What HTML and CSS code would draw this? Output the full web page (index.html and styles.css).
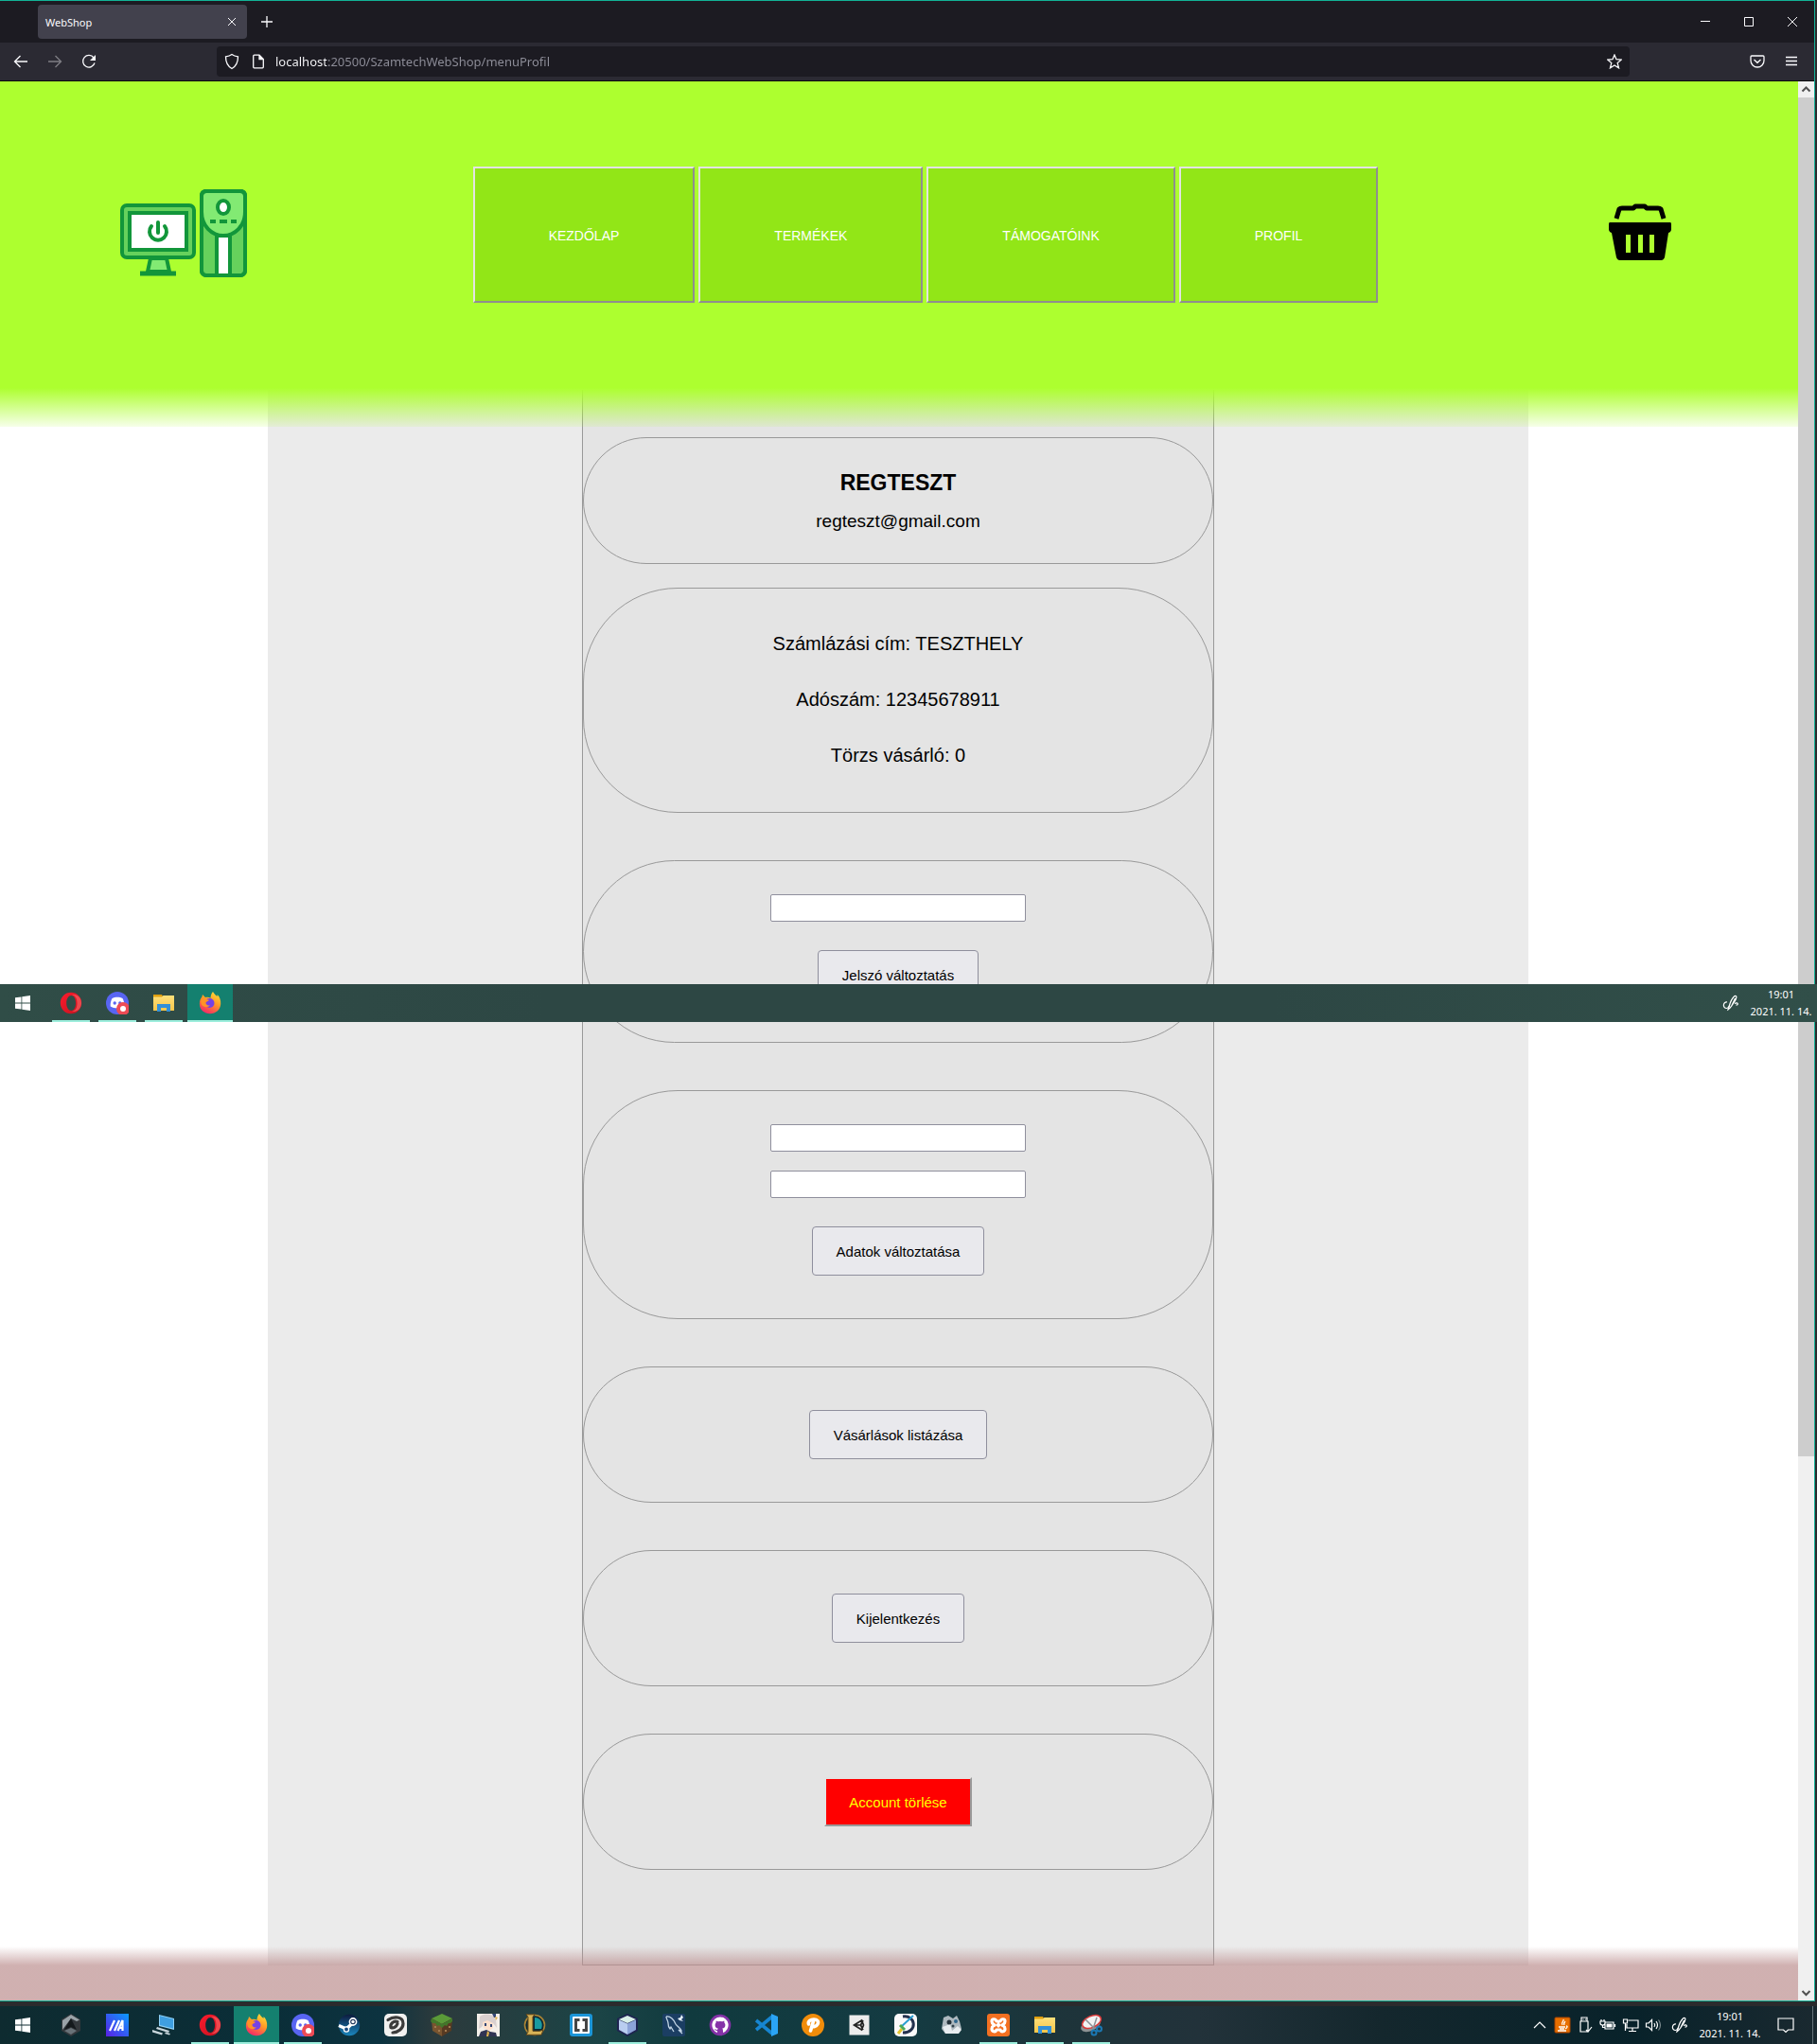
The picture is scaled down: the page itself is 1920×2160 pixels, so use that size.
FILE: index.html
```html
<!DOCTYPE html>
<html lang="hu">
<head>
<meta charset="utf-8">
<title>WebShop</title>
<link rel="stylesheet" href="styles.css">
</head>
<body>
<svg class="defs" aria-hidden="true">
  <defs>
    <linearGradient id="g-opera" x1="0" y1="0" x2="1" y2="1"><stop offset="0" stop-color="#ff1b2d"/><stop offset="1" stop-color="#c1121f"/></linearGradient>
    <linearGradient id="g-fire" x1="0.8" y1="0" x2="0.3" y2="1"><stop offset="0" stop-color="#ffe03a"/><stop offset="0.45" stop-color="#ff9a26"/><stop offset="1" stop-color="#f4256a"/></linearGradient>
    <linearGradient id="g-folder" x1="0" y1="0" x2="0" y2="1"><stop offset="0" stop-color="#ffe07a"/><stop offset="1" stop-color="#f7c64a"/></linearGradient>
    <linearGradient id="g-steam" x1="0" y1="0" x2="0" y2="1"><stop offset="0" stop-color="#0d1b3e"/><stop offset="1" stop-color="#1a86bd"/></linearGradient>
    <linearGradient id="g-m" x1="0" y1="1" x2="1" y2="0"><stop offset="0" stop-color="#5a1fe6"/><stop offset="1" stop-color="#0a9bff"/></linearGradient>
  </defs>
  <symbol id="i-start" viewBox="0 0 24 24"><path fill="#fff" d="M4 6.300l6.500-.9v6.200H4zM11.300 5.300L20 4v7.600h-8.700zM4 12.400h6.500v6.200L4 17.700zM11.300 12.400H20V20l-8.700-1.300z"/></symbol>
  <symbol id="i-opera" viewBox="0 0 24 24"><path fill="url(#g-opera)" fill-rule="evenodd" d="M12 .8a11.200 11.200 0 1 0 0 22.400A11.200 11.200 0 1 0 12 .8zM12.300 4c2.800 0 4.700 3.500 4.700 8s-1.900 8-4.700 8-5.100-3.500-5.100-8 2.300-8 5.100-8z"/><path fill="#ff6a6a" d="M13 3.400c4 .3 5.500 4 5.500 8.600s-1.500 8.300-5.500 8.600c5 1.400 10-2.600 10-8.600s-5-10-10-8.600z" opacity=".6"/></symbol>
  <symbol id="i-discord" viewBox="0 0 24 24"><circle cx="12" cy="12" r="12" fill="#5865f2"/><path fill="#fff" d="M6.500 7c3-1.600 8-1.600 11 0 1.500 2.600 2 5.600 1.800 8.600-3.500 2.600-11 2.600-14.600 0C4.500 12.600 5 9.600 6.500 7z"/><circle cx="9.200" cy="12" r="1.700" fill="#5865f2"/><circle cx="14.800" cy="12" r="1.700" fill="#5865f2"/><circle cx="18" cy="18" r="7" fill="#ed4b55"/><circle cx="18" cy="18" r="3" fill="#fff"/></symbol>
  <symbol id="i-folder" viewBox="0 0 24 24"><path fill="#e0a010" d="M1 3h9l1 2v3H1z"/><path fill="url(#g-folder)" d="M1 5.500h9L11.500 4H23v16H1z"/><path fill="#3390d8" d="M5 13h14v8h-4v-4H9v4H5z"/></symbol>
  <symbol id="i-firefox" viewBox="0 0 24 24"><path fill="url(#g-fire)" d="M15 0c1 2 2.300 3 4.500 5 .2-.6 0-1.300 0-2C22 5 23.500 9 23.200 13 22.700 19 18 23.300 12 23.300 6 23.300 1 19 .9 13 .8 9.500 2 7 3.500 5.200L4 3l3 3c2-.5 4-.3 5.500.8C12.600 4 13.500 1.500 15 0z"/><circle cx="11.500" cy="12" r="5" fill="#7542e5"/><path fill="#ff9226" d="M2 8c3-1 5 0 9 .8-1 1.700-3 1.400-3.500 2.700-.3 1.700 1.500 3.500 4.500 3C8 18 3 15.500 2.500 12z"/></symbol>
  <symbol id="i-pen" viewBox="0 0 18 18"><g fill="none" stroke="#fff" stroke-width="1.200"><path d="M5 8c-4.500-.5-5 6.500-.5 6.500 2 0 2-2.500 3.500-2.800"/><path d="M7 13C8 9 10 4 13 1.500c3-.7 2 3-.5 6.500S8.500 14.500 6 16zM9.500 12.500L13.500 4M13 9.500c3.500-2 4.500 1.500 1.500 1.700"/></g></symbol>
</svg>

<div class="window">
  <div class="titlebar">
    <div class="tab"><span>WebShop</span>
      <button class="icon-btn tab-close" aria-label="Lap bezárása"><svg width="10" height="10" viewBox="0 0 10 10"><path d="M1 1l8 8M9 1l-8 8"/></svg></button>
    </div>
    <button class="icon-btn new-tab" aria-label="Új lap"><svg width="12" height="12" viewBox="0 0 12 12"><path d="M6 0v12M0 6h12"/></svg></button>
    <div class="window-buttons">
      <button class="icon-btn" aria-label="Kis méret"><svg width="10" height="10" viewBox="0 0 10 10"><path d="M0 4.500h10"/></svg></button>
      <button class="icon-btn" aria-label="Teljes méret"><svg width="10" height="10" viewBox="0 0 10 10"><path d="M.5.5h9v9h-9z"/></svg></button>
      <button class="icon-btn" aria-label="Bezárás"><svg width="10" height="10" viewBox="0 0 10 10"><path d="M0 0l10 10M10 0L0 10"/></svg></button>
    </div>
  </div>
  <div class="toolbar">
    <div class="history">
      <button class="icon-btn" aria-label="Vissza"><svg width="16" height="16" viewBox="0 0 16 16"><path d="M15 8H1.500M7.500 2l-6 6 6 6"/></svg></button>
      <button class="icon-btn dim" aria-label="Előre"><svg width="16" height="16" viewBox="0 0 16 16"><path d="M1 8h13.500M8.500 2l6 6-6 6"/></svg></button>
      <button class="icon-btn" aria-label="Frissítés"><svg width="16" height="16" viewBox="0 0 16 16"><path d="M14 9.500A6.300 6.300 0 1 1 13 4"/><path class="solid" d="M15 1v6H9z"/></svg></button>
    </div>
    <div class="urlbar">
      <svg width="16" height="18" viewBox="0 0 16 18"><path d="M8 1.500c2 1.500 4 2 6.500 2.300 0 6-1.500 10-6.500 12.700C3 13.800 1.500 9.800 1.500 3.800 4 3.500 6 3 8 1.500z"/></svg>
      <svg class="doc" width="14" height="16" viewBox="0 0 14 16"><path d="M1.700 2.200q0-1 1-1H8L12.300 5.500v8.300q0 1-1 1H2.700q-1 0-1-1zM8 1.200v4.300h4.300"/><path class="solid" d="M8 1.200v4.300h4.300z"/></svg>
      <input class="url" type="text" aria-label="Cím" value="localhost:20500/SzamtechWebShop/menuProfil">
      <button class="icon-btn star" aria-label="Könyvjelző"><svg width="16" height="16" viewBox="0 0 16 16"><path d="M8 1l2 4.700 5.200.5-4 3.400 1.300 5.200L8 12l-4.500 2.800 1.300-5.200-4-3.400L6 5.700z"/></svg></button>
    </div>
    <div class="tools">
      <button class="icon-btn" aria-label="Pocket"><svg width="16" height="14" viewBox="0 0 16 14"><path d="M1 2q0-1 1-1h12q1 0 1 1v4a7 7 0 0 1-14 0zM4.500 5L8 8.300 11.500 5"/></svg></button>
      <button class="icon-btn" aria-label="Menü"><svg width="12" height="12" viewBox="0 0 12 12"><path d="M0 1.500h12M0 5.500h12M0 9.500h12"/></svg></button>
    </div>
  </div>

  <div class="viewport">
    <div class="page">
      <header class="site-header">
        <a href="#" class="logo" aria-label="WebShop"><svg width="134" height="94" viewBox="0 0 134 94">
          <g stroke="#12963a" stroke-width="4">
            <path fill="#82ea73" d="M32 73h17l3 14H29z"/>
            <rect x="2" y="17" width="76" height="55" rx="5" fill="#66d15c"/>
            <rect x="10" y="25" width="60" height="39" fill="#fff"/>
            <path fill="none" d="M21 89h38" stroke-width="5"/>
            <path fill="none" d="M33 39a9 9 0 1 0 14 0M40 35v11" stroke-linecap="round"/>
            <rect x="86" y="2" width="46" height="89" rx="5" fill="#66d15c"/>
            <path fill="#fff" d="M102 49h14v42h-14z"/>
            <path fill="#82ea73" d="M91 2h36q5 0 5 5v17c0 15-11 25-23 25S86 39 86 24V7q0-5 5-5z"/>
            <ellipse cx="109" cy="19" rx="6" ry="7" fill="#fff"/>
            <path d="M95 34h6M105 34h8M117 34h6"/>
            <rect x="86" y="2" width="46" height="89" rx="5" fill="none"/>
          </g></svg></a>
        <nav class="menu">
          <button>KEZDŐLAP</button>
          <button>TERMÉKEK</button>
          <button>TÁMOGATÓINK</button>
          <button>PROFIL</button>
        </nav>
        <a href="#" class="basket" aria-label="Kosár"><svg width="66" height="60" viewBox="0 0 66 60">
          <path fill="none" stroke="#000" stroke-width="5" stroke-linejoin="round" d="M8 16L11 6q1-1 3-1h12l2-2h10l2 2h12q2 0 3 1l3 10"/>
          <path fill-rule="evenodd" d="M1 20h64q1 0 1 2v5q0 3-3 4l-4 26q-1 3-3 3H11q-2 0-3-3L3 31q-3-1-3-4v-5q0-2 1-2zM18 33v19h5V33zM31 33v19h5V33zM43 33v19h5V33z"/></svg></a>
      </header>

      <main class="content">
        <div class="profile">
          <section class="card user">
            <h1>REGTESZT</h1>
            <p>regteszt@gmail.com</p>
          </section>
          <section class="card details">
            <p>Számlázási cím: TESZTHELY</p>
            <p>Adószám: 12345678911</p>
            <p>Törzs vásárló: 0</p>
          </section>
          <form class="card fields">
            <input type="password" aria-label="Új jelszó">
            <button type="button">Jelszó változtatás</button>
          </form>
          <form class="card fields">
            <input type="text" aria-label="Számlázási cím">
            <input type="text" aria-label="Adószám">
            <button type="button">Adatok változtatása</button>
          </form>
          <form class="card single"><button type="button">Vásárlások listázása</button></form>
          <form class="card single"><button type="button">Kijelentkezés</button></form>
          <form class="card single"><button type="button" class="danger">Account törlése</button></form>
        </div>
      </main>
      <footer class="site-footer"></footer>
    </div>
    <div class="scrollbar">
      <svg width="17" height="17" viewBox="0 0 17 17"><path d="M4.500 10.500l4-4 4 4"/></svg>
      <div class="track"><div class="thumb"></div></div>
      <svg width="17" height="17" viewBox="0 0 17 17"><path d="M4.500 7l4 4 4-4"/></svg>
    </div>
  </div>
</div>

<div class="taskbar upper">
  <button class="task start" aria-label="Start"><svg><use href="#i-start"/></svg></button>
  <button class="task open" aria-label="Opera"><svg><use href="#i-opera"/></svg></button>
  <button class="task open" aria-label="Discord"><svg><use href="#i-discord"/></svg></button>
  <button class="task open" aria-label="Fájlkezelő"><svg><use href="#i-folder"/></svg></button>
  <button class="task active" aria-label="Firefox"><svg><use href="#i-firefox"/></svg></button>
  <div class="tray"><svg class="t18"><use href="#i-pen"/></svg>
    <div class="clock"><span>19:01</span><span>2021. 11. 14.</span></div></div>
</div>

<div class="taskbar lower">
  <button class="task start" aria-label="Start"><svg><use href="#i-start"/></svg></button>
  <button class="task" aria-label="Armoury Crate"><svg viewBox="0 0 24 24"><path fill="#33383c" d="M12 0l10 6v12l-10 6L2 18V6z"/><path fill="#9aa3a8" d="M12 1l9 5.500L18 8l-6-3-6 8-3 4V7z"/><path fill="#14191c" d="M12 5l6 12-6-3-7 3z"/><path fill="#697278" d="M5 18l7-3 6 3-6 4z"/></svg></button>
  <button class="task" aria-label="MyASUS"><svg viewBox="0 0 24 24"><path fill="url(#g-m)" d="M0 0h24v24H0z"/><path fill="none" stroke="#fff" stroke-width="2.200" d="M4 18l5-11M9 18l5-11M12.500 18l5-11v11M14.500 15h4"/></svg></button>
  <button class="task" aria-label="Ez a gép"><svg viewBox="0 0 24 24"><path fill="#8fd0f5" d="M7 1l16 4v12L7 13z"/><path fill="#3f9fe0" d="M8 2.300l14 3.500v9.800L8 12z"/><path fill="#c9d6dc" d="M5 14l13 4-1 2-13-4zM0 17l11 3.500-1 2L0 19.500zM13 21l5 1.500 1-1.500-5-1.500z"/></svg></button>
  <button class="task open" aria-label="Opera"><svg><use href="#i-opera"/></svg></button>
  <button class="task active" aria-label="Firefox"><svg><use href="#i-firefox"/></svg></button>
  <button class="task open" aria-label="Discord"><svg><use href="#i-discord"/></svg></button>
  <button class="task" aria-label="Steam"><svg viewBox="0 0 24 24"><circle cx="12" cy="12" r="11.200" fill="url(#g-steam)"/><path d="M1 12.500l8 3.500 6.500-6" fill="none" stroke="#fff" stroke-width="3.500"/><circle cx="16" cy="8.500" r="3.600" fill="#122a52" stroke="#fff" stroke-width="1.600"/><circle cx="16" cy="8.500" r="1.700" fill="#fff"/><circle cx="9" cy="16.500" r="2.600" fill="#1c4b80" stroke="#fff" stroke-width="1.300"/></svg></button>
  <button class="task" aria-label="Clip Studio Paint"><svg viewBox="0 0 24 24"><rect width="24" height="24" rx="5" fill="#f1f1f0"/><path fill="none" stroke="#3b3b3b" stroke-width="3.200" stroke-linecap="round" d="M4 6.500c6-4 16-4 16 4 0 5-5 9-11 9.500M14 8.500c-4-1.500-8 2-7 6 3 1.500 6-1 7-4"/></svg></button>
  <button class="task" aria-label="Minecraft"><svg viewBox="0 0 24 24"><path fill="#5a9a38" d="M12 0l11 5-11 6L1 5z"/><path fill="#79542f" d="M1 5l11 6v13L2 18z"/><path fill="#573a22" d="M23 5l-11 6v13l10-6z"/><path fill="#42782a" d="M1 5l11 6 11-6v3l-2 2-2 0-2 3-2-1-3 3-3-3-2 1-2-3-3 0-2-2z"/><path fill="#a17a50" d="M4 13h2v2H4zM8 17h2v2H8zM15 17h2v2h-2zM19 13h2v2h-2z"/></svg></button>
  <button class="task" aria-label="Genshin Impact"><svg viewBox="0 0 24 24"><path fill="#f4efe9" d="M0 0h24v24H0z"/><path fill="#d9d0cf" d="M3 3c5-4 14-3 17 3l1 9-4-5-8-2-4 6-3 2z"/><path fill="#ffe0cb" d="M6 9l5-2 6 3v5l-4 3-6-3z"/><path fill="#344877" d="M8 10h2v3H8zM14 11h2v3h-2zM16 0h4v4h-2z"/><path fill="#303453" d="M4 19l6-2 4 2 6 1 1 4H2z"/><path fill="#e2b34c" d="M11 18l2 2-1 4h-2zM19 3l3 1-2 3z"/></svg></button>
  <button class="task" aria-label="League of Legends"><svg viewBox="0 0 24 24"><circle cx="12" cy="12" r="10.500" fill="#0b2a35" stroke="#a98334" stroke-width="1.600"/><path fill="#1a9aa0" d="M12 4c7 0 9 7 7 12h-7z"/><path fill="#d9b457" stroke="#5d431b" d="M3 .8h9l-2 2.500v15h7l4-1-2 5H3l2-3V3.500z"/></svg></button>
  <button class="task" aria-label="Brackets"><svg viewBox="0 0 24 24"><rect width="24" height="24" rx="3" fill="#1b95d8"/><rect x="3" y="3" width="18" height="18" rx="1" fill="#fff"/><path fill="none" stroke="#454545" stroke-width="3" d="M10.500 6.500H6.500v11h4M13.500 6.500h4v11h-4"/></svg></button>
  <button class="task open" aria-label="NetBeans"><svg viewBox="0 0 24 24"><path fill="#1d2450" d="M12 0l11 5v13l-11 6L1 18V5z"/><path fill="#d8f0e8" d="M12 2l9 4-9 4-9-4z"/><path fill="#b9cdf0" d="M3 6.500l9 4V22l-9-5z"/><path fill="#8ca3d8" d="M21 6.500l-9 4V22l9-5z"/></svg></button>
  <button class="task" aria-label="MySQL Workbench"><svg viewBox="0 0 24 24"><rect width="24" height="24" rx="2" fill="#1b3e63"/><path fill="none" stroke="#c3d6e6" stroke-width="1.300" d="M4 3c4-1 8 3 10 8 2 3 5 4 6 7l-3-1 4 4M4 3c0 3 2 4 2 7 0 3 1 5 2 6l1-2 3 5"/><path fill="#e8f3fa" d="M16 5l3-1 1-3 2 3-2 2 2 2-4-1z"/></svg></button>
  <button class="task" aria-label="GitHub"><svg viewBox="0 0 24 24"><circle cx="12" cy="12" r="11.300" fill="#8532a8"/><path fill="#fff" d="M12 3.500a8.500 8.500 0 0 0-3 16.500v-2c-2 .3-2.500-1-3.200-2 1.400 0 1.800 1.200 3.400.8l.6-1.200c-2.600-.5-3.600-2.300-3-4.800l.8-1.300.1-2 2 .8q2.300-.6 4.600 0l2-.8.1 2 .8 1.300c.6 2.500-.4 4.300-3 4.800.8 1 .8 2 .8 4.400a8.500 8.500 0 0 0-3-16.500z"/></svg></button>
  <button class="task" aria-label="Visual Studio Code"><svg viewBox="0 0 24 24"><path fill="none" stroke="#1685d1" stroke-width="3.600" d="M1 7l17 14M1 17L18 3"/><path fill="#2aa4f4" d="M17 0l7 3v18l-7 3z"/></svg></button>
  <button class="task" aria-label="PSeInt"><svg viewBox="0 0 24 24"><circle cx="12" cy="12" r="12" fill="#f08c0a"/><path fill="none" stroke="#fff" stroke-width="3.600" stroke-linecap="round" stroke-linejoin="round" d="M7.500 11c-1-3 2-5 5.500-5s5.500 2 4 5-5 3-6 2.500M12.500 8l-3 10"/></svg></button>
  <button class="task" aria-label="Unity"><svg viewBox="0 0 24 24"><path fill="#ececec" d="M1.500 1.500h21v21h-21z"/><path fill="none" stroke="#222" stroke-width="1.700" d="M6.500 12l8-5 2 5-2 5zM6.500 12h7M13.500 12l2.500-5M13.500 12l2.500 5"/></svg></button>
  <button class="task" aria-label="PaintTool"><svg viewBox="0 0 24 24"><rect width="24" height="24" rx="5" fill="#fafafa"/><path fill="none" stroke="#24324e" stroke-width="3" d="M9 3c14-2 16 17 0 17"/><path stroke="#e4c52c" stroke-width="3" d="M4 21l4-5"/><path stroke="#299ed1" stroke-width="2" d="M7 14L20 2"/><path stroke="#4caa55" stroke-width="3" d="M6 12l5 5"/></svg></button>
  <button class="task" aria-label="GIMP"><svg viewBox="0 0 24 24"><path fill="#aeb9bf" d="M3 4l5-2 5 3 4-3 3 6 2 8-4 5H5l-4-5z"/><path fill="#e8edf0" d="M2 14l8-3 2 7 6-5 4 4-3 4H5z"/><circle cx="9" cy="9" r="2.500" fill="#26333c"/><circle cx="16" cy="8" r="2" fill="#30688e"/><circle cx="13" cy="13" r="1.500" fill="#33444e"/></svg></button>
  <button class="task open" aria-label="XAMPP"><svg viewBox="0 0 24 24"><rect width="24" height="24" rx="3" fill="#f37021"/><path fill="none" stroke="#fff" stroke-width="3.200" stroke-linejoin="round" d="M5 8c0-3 4-3 5 0h4c1-3 5-3 5 0s-2 3-3 4c1 1 3 1 3 4s-4 4-5 1h-4c-1 3-5 2-5-1s2-3 3-4C7 11 5 11 5 8zM10.500 10.500l3 3M13.500 10.500l-3 3"/></svg></button>
  <button class="task open" aria-label="Fájlkezelő"><svg><use href="#i-folder"/></svg></button>
  <button class="task open" aria-label="Képmetsző"><svg viewBox="0 0 24 24"><ellipse cx="11.500" cy="12" rx="11" ry="6" transform="rotate(-25 11.500 12)" fill="#8e9293"/><ellipse cx="12.500" cy="8.500" rx="10.500" ry="6" transform="rotate(-25 12.500 8.500)" fill="#f3f3f3" stroke="#d83a3a" stroke-width="1.500"/><path stroke="#8b9296" stroke-width="1.500" d="M6 6l9 9M18 4l-4 12"/><g fill="none" stroke="#1b78b4" stroke-width="2"><circle cx="15" cy="20" r="2.500"/><circle cx="20.500" cy="16" r="2.500"/></g></svg></button>
  <div class="tray">
    <svg class="t18" viewBox="0 0 18 18"><path class="line" d="M3 12l6-6 6 6"/></svg>
    <svg class="t18" viewBox="0 0 18 18"><rect x="1" y="1" width="16" height="16" rx="1" fill="#e76f00" stroke="#a94400"/><path fill="none" stroke="#fff" stroke-width="1.300" d="M10 3c1 2-3 3-1 6M12 5c-1 1-2 2-1 4M5 11h7M13 10c2 0 1 2-1 3M6 13h5M4 15h9"/></svg>
    <svg class="t18" viewBox="0 0 18 18"><path class="line" d="M5 5V1h6v4M4 5h8v11H4zM7 2.500v1M9.500 2.500v1M10 14l2 2 4-5"/></svg>
    <svg class="t18" viewBox="0 0 18 18"><path class="line" d="M6 6h9v7H6zM16.500 8v3M1 5h5v2q0 2-2.500 2T1 7zM2 3v2M5 3v2M3.500 9v2.500H6"/><path fill="#fff" d="M7.500 7.500h6v4h-6z"/></svg>
    <svg class="t18" viewBox="0 0 18 18"><path class="line" d="M6.500 4H17v8H5V8M11 12v3M7 15.500h8M1.500 3h4v4h-4zM3.500 7v8"/></svg>
    <svg class="t18" viewBox="0 0 18 18"><path class="line" d="M1.500 7h2.500l3.500-3.500v11L4 11H1.500zM10 7q1.500 2 0 4M12 5q3 4 0 8"/><path class="line" opacity=".45" d="M14.500 3.500q4 5.500 0 11"/></svg>
    <svg class="t18 pen"><use href="#i-pen"/></svg>
    <div class="clock"><span>19:01</span><span>2021. 11. 14.</span></div>
    <svg class="note" viewBox="0 0 18 18"><path class="line" d="M1 2h16v12h-5.500L9 16.500 6.500 14H1z"/></svg>
  </div>
</div>
</body>
</html>
```
FILE: styles.css
```css
* { box-sizing: border-box; }

body {
  position: relative;
  margin: 0;
  background: #2b2b2d;
  font-family: "Liberation Sans", Arial, sans-serif;
  color: #000;
}

button, input { font-family: inherit; }
.defs { position: absolute; width: 0; height: 0; }

/* Browser window */
.window {
  margin: 0 2px 5px 0;
  border: 1px solid #12b296;
  border-left: 0;
}

.titlebar, .toolbar, .urlbar, .history, .window-buttons, .tools {
  display: flex;
  align-items: center;
}

.titlebar {
  height: 44px;
  padding-left: 40px;
  background: #1c1b22;
}

.tab {
  display: flex;
  align-items: center;
  justify-content: space-between;
  width: 221px;
  height: 36px;
  padding: 0 6px 0 8px;
  border-radius: 4px;
  background: #42414d;
  color: #fbfbfe;
  font: 11px "Noto Sans", "Open Sans", sans-serif;
}

.icon-btn {
  display: flex;
  align-items: center;
  justify-content: center;
  width: 20px;
  height: 20px;
  padding: 0;
  border: 0;
  background: none;
}

.window svg { flex: none; }
.icon-btn path, .urlbar path {
  fill: none;
  stroke: #fbfbfe;
  stroke-width: 1.3;
}
.icon-btn .solid, .urlbar .solid { fill: #fbfbfe; stroke: none; }
.tab-close path, .window-buttons path { stroke-width: 1; }
.dim { opacity: .4; }
.new-tab { margin-left: 11px; }

.window-buttons { margin-left: auto; }
.window-buttons .icon-btn { width: 46px; }

.toolbar {
  height: 41px;
  border-bottom: 1px solid #0c0c0d;
  background: #2b2a33;
  justify-content: space-between;
}

.history { gap: 16px; padding-left: 12px; }
.tools { gap: 16px; padding-right: 14px; }

.urlbar {
  flex: 1;
  height: 32px;
  margin: 0 125px 0 125px;
  padding: 0 6px 0 8px;
  border-radius: 4px;
  background: #1c1b22;
}
.doc { margin: 0 4px 0 13px; }
.url {
  flex: 1;
  padding: 0 0 0 7px;
  border: 0;
  outline: 0;
  background: linear-gradient(90deg, #fbfbfe 61px, #8f8f9a 61px) text;
  -webkit-background-clip: text;
  color: transparent;
  font: 13px/20px "Noto Sans", "Open Sans", sans-serif;
}

/* Page area and scrollbar */
.viewport { display: flex; }
.page { flex: 1; min-width: 0; background: #fff; }

.scrollbar {
  display: flex;
  flex-direction: column;
  width: 17px;
  background: #f0f0f0;
}
.scrollbar path { fill: none; stroke: #505050; stroke-width: 2; }
.track { flex: 1; }
.thumb { height: 72%; background: #cdcdcd; }

/* Shop header */
.site-header {
  position: relative;
  z-index: 1;
  display: flex;
  justify-content: space-between;
  align-items: center;
  margin-bottom: -39px;
  padding: 90px 134px 131px 127px;
  background: linear-gradient(to top, rgba(173, 255, 47, .1), #adff2f 41px);
}
.logo svg, .basket svg { display: block; }
.logo { padding-bottom: 2px; }
.basket { padding-bottom: 6px; }

.menu {
  display: flex;
  gap: 4px;
  margin-right: 5px;
}
.menu button {
  height: 144px;
  padding: 1px 78px 0;
  border: 2px outset #e3e3e3;
  background: #92e617;
  color: #fff;
  font-size: 14px;
}

/* Profile */
.content {
  display: flex;
  justify-content: center;
  padding-right: 2px;
}

.profile {
  display: flex;
  flex-direction: column;
  width: 668px;
  padding: 50px 0 100px;
  border: 1px solid #999;
  border-top: 0;
  background: #e4e4e4;
}

.content::before, .content::after {
  content: "";
  flex: 0 1 332px;
  background: #ebebeb;
}

.card {
  display: flex;
  flex-direction: column;
  align-items: center;
  margin-bottom: 50px;
  border: 1px solid #999;
  border-radius: 100px;
}
.card:last-child { margin-bottom: 0; }

.card h1, .card p { margin: 0; }
.user {
  gap: 16px;
  margin-bottom: 25px;
  padding: 34px 0 32px;
}
.user h1 { font-size: 23px; line-height: 26px; }
.user p { font-size: 19px; line-height: 24px; }

.details { padding: 29px 0 30px; }
.details p { font-size: 20px; line-height: 59px; }

.fields { padding: 35px 0 45px; gap: 20px; }
.fields input {
  width: 270px;
  height: 29px;
  border: 1px solid #8f8f9d;
  border-radius: 2px;
  background: #fff;
}
.fields button { margin-top: 10px; }

.single { padding: 45px 0; }

.card button {
  height: 52px;
  padding: 0 25px;
  border: 1px solid #8f8f9d;
  border-radius: 4px;
  background: #e9e9ed;
  color: #000;
  font-size: 15px;
}
.card .danger {
  padding: 0 24px;
  border: 2px solid;
  border-color: #e3e3e3 #999 #999 #e3e3e3;
  border-radius: 0;
  background: #f00;
  color: #ff0;
}

.site-footer {
  position: relative;
  height: 57px;
  margin-top: -20px;
  background: linear-gradient(rgba(188, 143, 143, 0), rgba(188, 143, 143, .7) 20px);
}

/* Taskbars */
.taskbar {
  display: flex;
  gap: 1px;
  height: 40px;
}
.upper {
  position: absolute;
  z-index: 2;
  top: 1040px;
  left: 0;
  right: 0;
  background: linear-gradient(90deg, #304d47, #2d4744 30%, #2d4744 70%, #314f49);
}
.lower {
  background: linear-gradient(90deg, #0e2b30, #0a2e38 15%, #0c3340 21%, #2c3a3c 24%, #1b4446 33%, #103a3e 38%, #143b42 50%, #1d343a 58%, #22323a 66%, #14272d 76%, #08222a 90%, #1a2930);
}

.task {
  display: flex;
  align-items: center;
  justify-content: center;
  width: 48px;
  height: 40px;
  padding: 0;
  border: 0;
  background: linear-gradient(#9ceedc, #9ceedc) center bottom / 0 2px no-repeat;
}
.task svg { width: 24px; height: 24px; }
.start { margin-right: 2px; }
.open { background-size: 40px 2px; }
.active { background-size: 48px 2px; background-color: #14806f; }

.tray {
  display: flex;
  align-items: center;
  gap: 6px;
  margin-left: auto;
}
.t18, .note { width: 18px; height: 18px; }
.line { fill: none; stroke: #fff; stroke-width: 1.2; }
.pen { margin-left: 4px; }

.clock {
  display: flex;
  flex-direction: column;
  align-items: center;
  width: 76px;
  color: #fff;
  font: 11px/18px "Noto Sans", "Open Sans", sans-serif;
}
.lower .tray {
  margin-right: 4px;
  padding-right: 19px;
  border-right: 1px solid #66747a;
}
.note { margin-left: 6px; }
```
